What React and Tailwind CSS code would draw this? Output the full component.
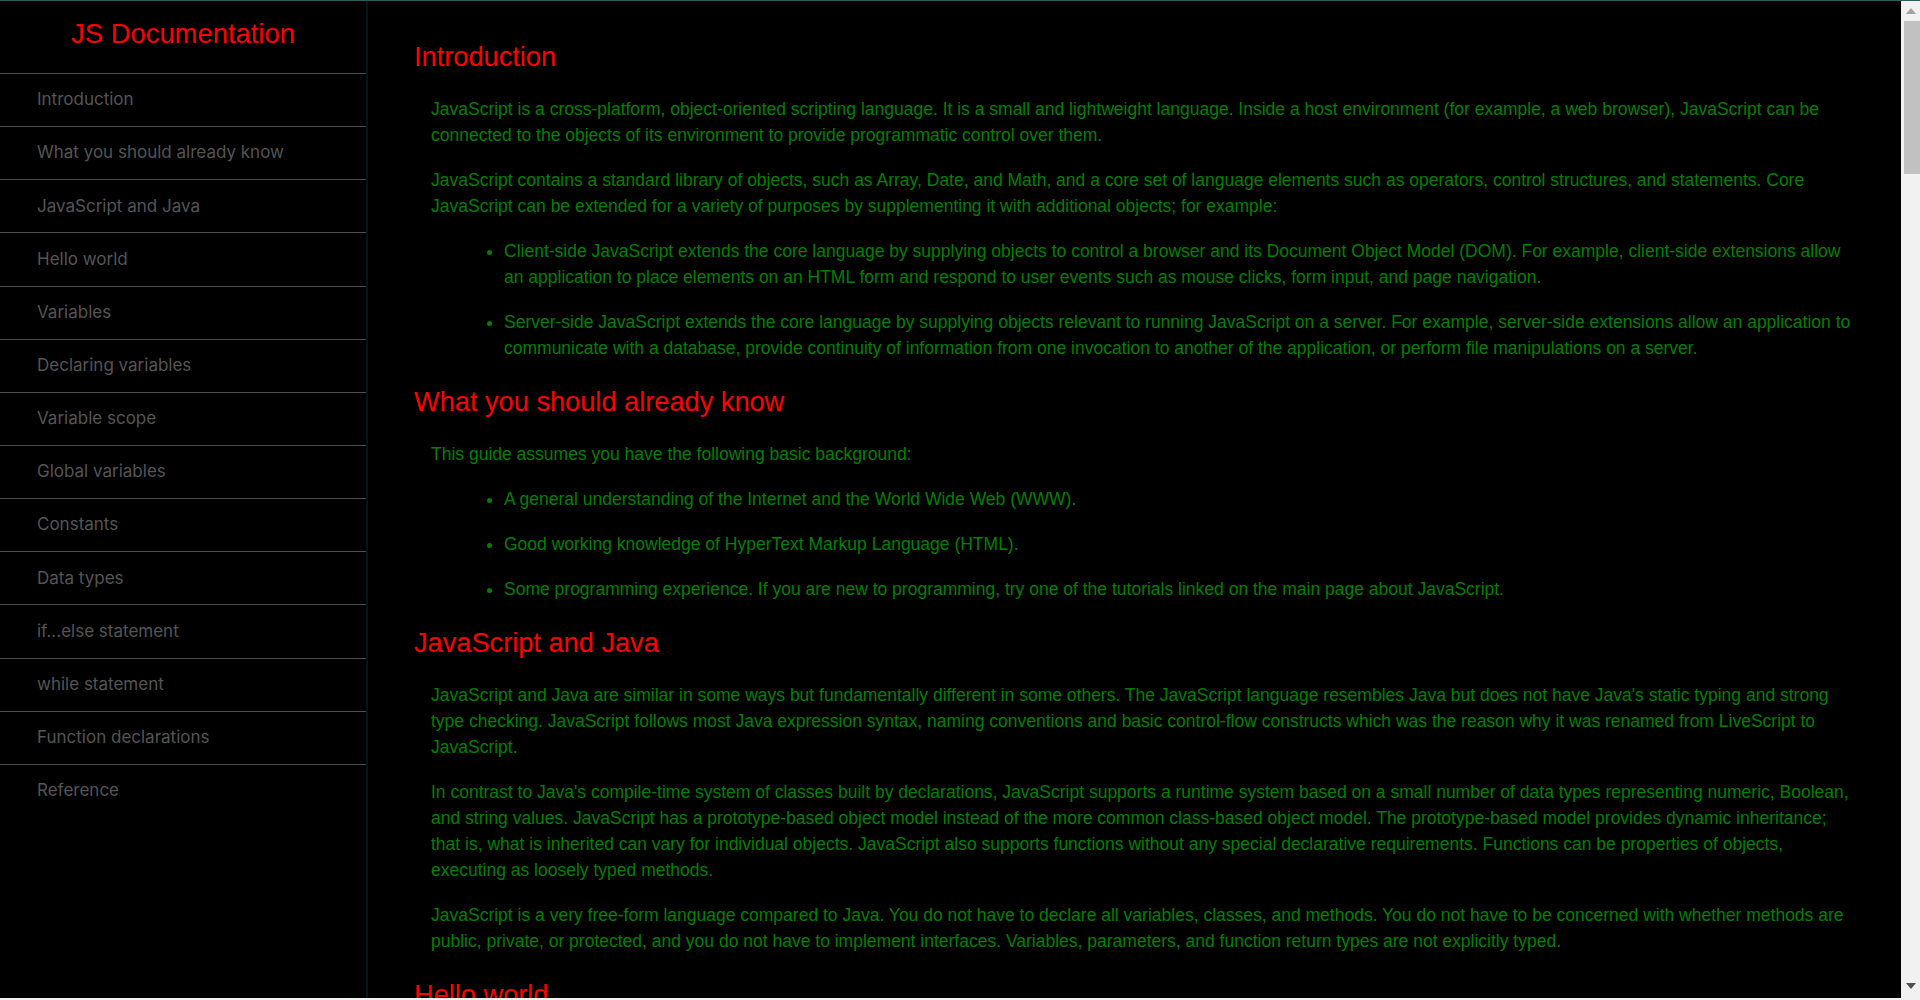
import React from "react";

const navItems = [
  "Introduction",
  "What you should already know",
  "JavaScript and Java",
  "Hello world",
  "Variables",
  "Declaring variables",
  "Variable scope",
  "Global variables",
  "Constants",
  "Data types",
  "if...else statement",
  "while statement",
  "Function declarations",
  "Reference",
];

const sections = [
  {
    title: "Introduction",
    blocks: [
      {
        p: "JavaScript is a cross-platform, object-oriented scripting language. It is a small and lightweight language. Inside a host environment (for example, a web browser), JavaScript can be connected to the objects of its environment to provide programmatic control over them.",
      },
      {
        p: "JavaScript contains a standard library of objects, such as Array, Date, and Math, and a core set of language elements such as operators, control structures, and statements. Core JavaScript can be extended for a variety of purposes by supplementing it with additional objects; for example:",
      },
      {
        ul: [
          "Client-side JavaScript extends the core language by supplying objects to control a browser and its Document Object Model (DOM). For example, client-side extensions allow an application to place elements on an HTML form and respond to user events such as mouse clicks, form input, and page navigation.",
          "Server-side JavaScript extends the core language by supplying objects relevant to running JavaScript on a server. For example, server-side extensions allow an application to communicate with a database, provide continuity of information from one invocation to another of the application, or perform file manipulations on a server.",
        ],
      },
    ],
  },
  {
    title: "What you should already know",
    blocks: [
      { p: "This guide assumes you have the following basic background:" },
      {
        ul: [
          "A general understanding of the Internet and the World Wide Web (WWW).",
          "Good working knowledge of HyperText Markup Language (HTML).",
          "Some programming experience. If you are new to programming, try one of the tutorials linked on the main page about JavaScript.",
        ],
      },
    ],
  },
  {
    title: "JavaScript and Java",
    blocks: [
      {
        p: "JavaScript and Java are similar in some ways but fundamentally different in some others. The JavaScript language resembles Java but does not have Java's static typing and strong type checking. JavaScript follows most Java expression syntax, naming conventions and basic control-flow constructs which was the reason why it was renamed from LiveScript to JavaScript.",
      },
      {
        p: "In contrast to Java's compile-time system of classes built by declarations, JavaScript supports a runtime system based on a small number of data types representing numeric, Boolean, and string values. JavaScript has a prototype-based object model instead of the more common class-based object model. The prototype-based model provides dynamic inheritance; that is, what is inherited can vary for individual objects. JavaScript also supports functions without any special declarative requirements. Functions can be properties of objects, executing as loosely typed methods.",
      },
      {
        p: "JavaScript is a very free-form language compared to Java. You do not have to declare all variables, classes, and methods. You do not have to be concerned with whether methods are public, private, or protected, and you do not have to implement interfaces. Variables, parameters, and function return types are not explicitly typed.",
      },
    ],
  },
  {
    title: "Hello world",
    blocks: [
      {
        p: "To get started with writing JavaScript, open the Scratchpad and write your first \"Hello world\" JavaScript code.",
      },
    ],
  },
];

const Section = ({ data }) => {
  return (
    <section>
      <h2 className="mt-[25px] mb-[23px] text-[27.2px] leading-[32px] text-[#ff0000]">
        {data.title}
      </h2>
      {data.blocks.map((b, i) =>
        b.p ? (
          <p key={i} className="my-[19px] ml-[17px]">
            {b.p}
          </p>
        ) : (
          <ul key={i} className="my-[19px] ml-[17px] pl-[73px] list-disc">
            {b.ul.map((li, j) => (
              <li key={j} className="my-[19px]">
                {li}
              </li>
            ))}
          </ul>
        )
      )}
    </section>
  );
};

export default function App() {
  return (
    <div
      className="h-screen w-full overflow-hidden bg-black flex flex-col border-t border-[#2e5b5f]"
      style={{ fontFamily: '"Liberation Sans", Arial, sans-serif' }}
    >
      <div className="flex flex-1 min-h-0">
        {/* Sidebar */}
        <nav className="w-[368px] shrink-0 border-r-2 border-[#061416]">
          <header className="h-[72px] pt-[17px] text-center text-[27.4px] leading-[32px] text-[#ff0000]">
            JS Documentation
          </header>
          <ul>
            {navItems.map((item) => (
              <li
                key={item}
                className="h-[53.15px] flex items-center pl-[37px] border-t border-[#4d4d4d] text-[17px] text-[#555555]"
                style={{ fontFamily: "Inter, sans-serif" }}
              >
                {item}
              </li>
            ))}
          </ul>
        </nav>

        {/* Content */}
        <main className="flex-1 min-w-0 overflow-hidden px-[46px] pt-[15px] text-[17.5px] leading-[26px] text-[#008000]">
          {sections.map((s) => (
            <Section key={s.title} data={s} />
          ))}
        </main>

        {/* Scrollbar */}
        <div className="w-[19px] shrink-0 bg-[#f1f1f1] flex flex-col items-center">
          <div className="h-[20px] flex items-center justify-center">
            <svg width="10" height="6" viewBox="0 0 10 6">
              <path d="M0 6 L5 0 L10 6 Z" fill="#a3a3a3" />
            </svg>
          </div>
          <div className="w-[16px] h-[153px] ml-[2px] bg-[#c1c1c1]" />
          <div className="flex-1" />
          <div className="h-[20px] mb-[2px] flex items-center justify-center">
            <svg width="10" height="6" viewBox="0 0 10 6">
              <path d="M0 0 L10 0 L5 6 Z" fill="#505050" />
            </svg>
          </div>
        </div>
      </div>
      <div className="h-[2px] bg-[#f1f1f1]" />
    </div>
  );
}
